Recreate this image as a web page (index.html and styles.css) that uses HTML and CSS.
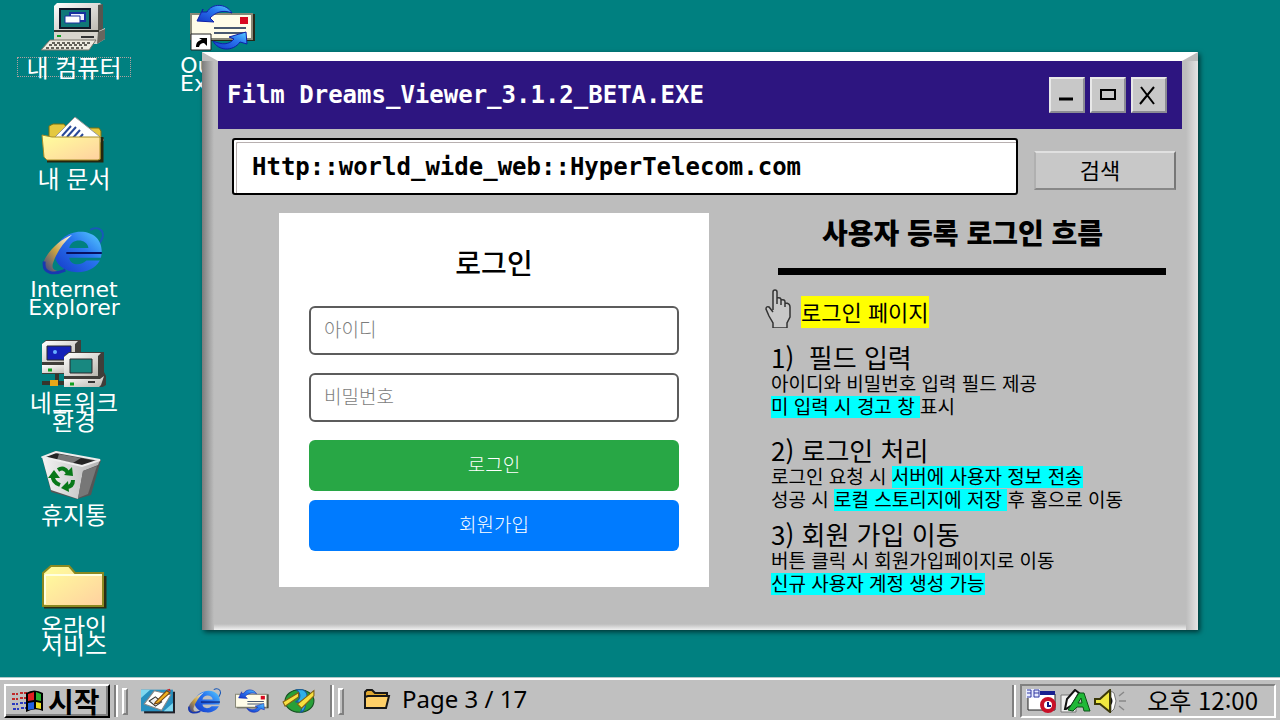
FILE: index.html
```html
<!DOCTYPE html>
<html lang="ko">
<head>
<meta charset="utf-8">
<title>Film Dreams Viewer</title>
<link rel="stylesheet" href="styles.css">
</head>
<body>
<svg class="defs" aria-hidden="true">
  <defs>
    <linearGradient id="paper" x1="0" y1="0" x2="1" y2="1"><stop offset="0" stop-color="#ffff9c"/><stop offset="1" stop-color="#ffd0a0"/></linearGradient>
    <linearGradient id="blue" x1="0" y1="1" x2="1" y2="0"><stop offset="0" stop-color="#1438c8"/><stop offset=".6" stop-color="#2a78f0"/><stop offset="1" stop-color="#58d0ff"/></linearGradient>
    <linearGradient id="gold" x1="0" y1="1" x2="1" y2="0"><stop offset="0" stop-color="#283890"/><stop offset=".5" stop-color="#c8a040"/><stop offset="1" stop-color="#fff"/></linearGradient>
    <linearGradient id="case" x1="0" y1="0" x2="1" y2="1"><stop offset="0" stop-color="#fff"/><stop offset="1" stop-color="#b8b4ac"/></linearGradient>
    <linearGradient id="bin" x1="0" y1="0" x2="1" y2="0"><stop offset="0" stop-color="#f4f4f4"/><stop offset="1" stop-color="#b4b4b4"/></linearGradient>
    <symbol id="ie" viewBox="0 0 66 50">
      <path d="M50 3c6-4 14-1 13 7-1 3-2 5-4 8" fill="none" stroke="#1858b8" stroke-width="2"/>
      <path d="M61 32H28c1 8 12 9 18 3h14C54 45 43 48 34 47 22 46 12 38 13 27 14 15 26 5 40 5c15 0 25 11 21 27zM28 22h20c-1-10-18-11-20 0z" fill="url(#blue)" fill-rule="evenodd"/>
      <path d="M25 27h37" stroke="#081060" stroke-width="2"/>
      <path d="M31 8C18 13 5 26 1 37c-2 12 9 14 22 8-8 2-14 0-12-7C15 26 22 16 31 8z" fill="url(#gold)"/>
      <path d="M2 36c-2 13 10 14 22 9" fill="none" stroke="#1838b0" stroke-width="3"/>
    </symbol>
    <symbol id="mail" viewBox="0 0 66 48">
      <path d="M4 11h61v27H4z" fill="#282818"/><path d="M1 11h61v25H1z" fill="#fffce8" stroke="#888878" stroke-width="2"/>
      <path d="M50 14h8v7h-8z" fill="#d80820"/><path d="M24 25h32M24 30h32" stroke="#485870" stroke-width="2"/>
      <path d="M42 10C36 0 22 0 17 9l-5 0 1-3-6 12 17 1-4-4c5-5 12-9 22-5z" fill="url(#blue)" stroke="#1020a8"/>
      <path d="M23 38c5 10 20 11 27 1l7 2-1-12-17 5 5 2c-5 6-12 6-21 2z" fill="url(#blue)" stroke="#1020a8"/>
    </symbol>
  </defs>
</svg>

<main class="desktop">
  <ul class="icons">
    <li class="icon">
      <svg viewBox="41 3 66 48" aria-hidden="true">
        <path d="M57 3h43l3 3v26H54V6z" fill="url(#case)"/><path d="M98 5l5-1v28l-5-2z" fill="#56554f"/>
        <path d="M59 8h32v21H59z" fill="#101828"/><path d="M61 10h28v17H61z" fill="#107878"/>
        <path d="M70 13h15v8H70z" fill="#eef" stroke="#1830a0" stroke-width="2"/><path d="M65 16h15v7H65z" fill="#fff" stroke="#1830a0"/>
        <path d="M54 31h45l6-3v11l-8 5H54z" fill="#d8d4cc"/><path d="M98 32l7-3v10l-8 5z" fill="#68665e"/><path d="M54 31h45" stroke="#34342f" stroke-width="2"/>
        <path d="M57 36h4" stroke="#10a020" stroke-width="2"/><path d="M81 37h13" stroke="#333" stroke-width="2"/>
        <path d="M50 40h46l-7 10H41z" fill="#eeeae0" stroke="#777368"/><path d="M52 43h38M49 45h38M46 48h37" stroke="#38362f" stroke-width="1.5" stroke-dasharray="3 2"/>
      </svg>
      <span class="icon-label selected">내 컴퓨터</span>
    </li>
    <li class="icon">
      <svg viewBox="41 115 66 48" aria-hidden="true">
        <path d="M49 139v-13l4-2h11l3 4h32l2 3v29H49z" fill="#e4c840" stroke="#777010"/>
        <path d="M75 117l29 23-20 16-29-19z" fill="#fff" stroke="#999"/><path d="M62 136l9-10M67 137l9-10M72 139l8-9M77 141l6-7" stroke="#284898" stroke-width="2"/>
        <path d="M102 137v24H47" fill="none" stroke="#26260e" stroke-width="3"/>
        <path d="M42 135l10 2h48v22l-2 1H47l-3-3z" fill="url(#paper)" stroke="#a88e28"/>
      </svg>
      <span class="icon-label">내 문서</span>
    </li>
    <li class="icon">
      <svg aria-hidden="true"><use href="#ie"/></svg>
      <span class="icon-label latin">Internet<br>Explorer</span>
    </li>
    <li class="icon">
      <svg viewBox="41 339 66 48" aria-hidden="true">
        <path d="M42 344l4-4h35v31l-4 3H42z" fill="#403e3a"/><path d="M42 344l4-3h32l-3 3v18H42z" fill="url(#case)"/><path d="M47 346h24v14H47z" fill="#1420b8" stroke="#28282c"/><circle cx="55" cy="352" r="2" fill="#68b0ff"/><path d="M42 365h34v8H42z" fill="url(#case)"/><path d="M48 370h4" stroke="#10a020" stroke-width="3"/>
        <path d="M57 374v9M42 383h23" stroke="#36342c" stroke-width="4"/><path d="M50 380h8v6h-8z" fill="#e8a818"/>
        <path d="M64 356l5-4h35v20l2 4v9l-5 3H64z" fill="#403e3a"/><path d="M64 357l5-4h32l-3 3v20H64z" fill="url(#case)"/>
        <path d="M70 359h22v14H70z" fill="#188880" stroke="#28282c"/><path d="M64 379h36l4-3-3 9-3 3H64z" fill="url(#case)"/><path d="M70 384h4" stroke="#10a020" stroke-width="3"/><path d="M88 382h7" stroke="#333" stroke-width="2"/>
      </svg>
      <span class="icon-label">네트워크<br>환경</span>
    </li>
    <li class="icon">
      <svg viewBox="41 452 66 48" aria-hidden="true">
        <path d="M42 458l13-6 46 9-10 35-14 4-26-7z" fill="#555"/>
        <path d="M45 458l11-4 39 8-13 5z" fill="#242424"/><path d="M59 455l22 4-8 5-16-3z" fill="#777"/>
        <path d="M42 458l40 9 18-6-2 5-15 6-5 28-27-9z" fill="url(#bin)"/><path d="M83 472l14-5-9 28-10 4z" fill="#777"/>
        <path d="M43 458l13-5 44 8-18 6z" fill="none" stroke="#eee" stroke-width="2"/>
        <path d="M58 471q6-4 10 3M73 481q0 7-7 7M60 486q-8-3-7-10" fill="none" stroke="#087818" stroke-width="4"/><path d="M64 476l9 1-1-9zM68 482l-7 7 8 4zM48 479l6-8 6 8z" fill="#087818"/>
      </svg>
      <span class="icon-label">휴지통</span>
    </li>
    <li class="icon">
      <svg viewBox="41 563 66 48" aria-hidden="true">
        <path d="M105 576v31H44" fill="none" stroke="#2d2c12" stroke-width="3"/>
        <path d="M43 573l8-7h18l6 7h28v33H43z" fill="url(#paper)" stroke="#8b8920" stroke-width="2"/><path d="M45 575h57M45 575v29" stroke="#ffffe0" stroke-width="2"/>
      </svg>
      <span class="icon-label">온라인<br>서비스</span>
    </li>
    <li class="icon">
      <svg viewBox="0 0 66 48" aria-hidden="true"><use href="#mail"/><path d="M1 31h20v16H1z" fill="#fff" stroke="#222"/><path d="M6 44c0-5 3-7 6-7l-3-2h8v8l-3-3c-3 0-4 1-5 4z"/></svg>
      <span class="icon-label latin">Outlook<br>Express</span>
    </li>
  </ul>

  <section class="window" aria-label="Film Dreams Viewer">
    <header class="titlebar">
      <h1>Film Dreams_Viewer_3.1.2_BETA.EXE</h1>
      <button class="winbtn" type="button" aria-label="Minimize"><svg viewBox="0 0 32 32"><path d="M8 20h14" stroke="#000" stroke-width="3"/></svg></button>
      <button class="winbtn" type="button" aria-label="Maximize"><svg viewBox="0 0 32 32"><path d="M9 11h14v9H9z" fill="none" stroke="#000" stroke-width="2"/></svg></button>
      <button class="winbtn" type="button" aria-label="Close"><svg viewBox="0 0 32 32"><path d="M8 8l13 17M21 8L7 25" stroke="#000" stroke-width="2"/></svg></button>
    </header>
    <form class="address">
      <input class="url" type="text" aria-label="주소" value="Http::world_wide_web::HyperTelecom.com">
      <button class="search" type="button">검색</button>
    </form>
    <div class="content">
      <form class="login">
        <h2>로그인</h2>
        <input type="text" aria-label="아이디" placeholder="아이디">
        <input type="password" aria-label="비밀번호" placeholder="비밀번호">
        <div class="actions">
          <button class="signin" type="button">로그인</button>
          <button class="signup" type="button">회원가입</button>
        </div>
      </form>
      <article class="notes">
        <h2>사용자 등록 로그인 흐름</h2>
        <hr>
        <p class="page-name">
          <svg viewBox="0 0 28 39" aria-hidden="true"><path d="M8 21V3q0-2 2-2t2 2v12-6q4-1 4 2v5-5q4-1 4 2v5-4q5 0 5 4v10l-3 6v5H8v-5l-4-7-3-7q0-3 3-2l4 5" fill="#c8c8c8" stroke="#333" stroke-width="1.5"/></svg>
          <mark class="yellow">로그인 페이지</mark>
        </p>
        <section class="step">
          <h3>1)&nbsp; 필드 입력</h3>
          <p>아이디와 비밀번호 입력 필드 제공</p>
          <p><mark>미 입력 시 경고 창&nbsp;</mark>표시</p>
        </section>
        <section class="step second">
          <h3>2) 로그인 처리</h3>
          <p>로그인 요청 시 <mark>서버에 사용자 정보 전송</mark></p>
          <p>성공 시 <mark>로컬 스토리지에 저장&nbsp;</mark>후 홈으로 이동</p>
        </section>
        <section class="step third">
          <h3>3) 회원 가입 이동</h3>
          <p>버튼 클릭 시 회원가입페이지로 이동</p>
          <p><mark>신규 사용자 계정 생성 가능</mark></p>
        </section>
      </article>
    </div>
  </section>
</main>

<footer class="taskbar">
  <button class="start" type="button">
    <svg viewBox="11 689 33 22" aria-hidden="true">
      <path d="M12 693h6M20 692h7M12 698h6M20 697h7" stroke="#c02828" stroke-width="2" stroke-dasharray="3 1"/><path d="M12 703h6M20 702h7M13 708h6M21 707h6" stroke="#2838c0" stroke-width="2" stroke-dasharray="3 1"/>
      <path d="M26 692q8-5 17 0v18q-8-4-17 1z"/><path d="M28 693l6-2v8l-6 1z" fill="#e02020"/><path d="M36 691l5 2v7l-5-1z" fill="#28b030"/><path d="M28 702l6-1v7l-6 1z" fill="#2060e0"/><path d="M36 701l5 1v6l-5-1z" fill="#f0e020"/>
    </svg>
    시작
  </button>
  <span class="divider"></span><span class="grip"></span>
  <nav class="quick" aria-label="빠른 실행">
    <button type="button" aria-label="바탕 화면 보기"><svg viewBox="0 0 33 24"><path d="M3 3h30v21H3z" fill="#202028"/><path d="M0 1h31v21H0z" fill="#2890c0"/><path d="M0 1h9L0 9zM31 22h-9l9-8z" fill="#80d8f0"/><path d="M13 2l16 4-9 15-17-6z" fill="#fff" stroke="#888"/><path d="M8 12l6-4 6 5-6 4z" fill="#eee" stroke="#333"/><path d="M14 13L25 2l3 2-11 10-4 1z" fill="#f0b020" stroke="#704010"/><path d="M25 1l3-1 1 3z" fill="#d02020"/></svg></button>
    <button type="button" aria-label="Internet Explorer"><svg><use href="#ie"/></svg></button>
    <button type="button" aria-label="Outlook Express"><svg><use href="#mail"/></svg></button>
    <button type="button" aria-label="채널 보기"><svg viewBox="0 0 33 24"><ellipse cx="17" cy="12" rx="14" ry="11" fill="#28a038" stroke="#145020"/><path d="M14 1c6 5 3 10-1 12 6-1 8 3 5 10 5-2 6-8 3-11 5-3 4-9-1-11z" fill="#30b0e8" stroke="#1858a0"/><path d="M1 13L16 4v4L3 17zM15 15L31 2v5L19 19z" fill="#f8e040" stroke="#806010"/></svg></button>
  </nav>
  <span class="divider"></span><span class="grip"></span>
  <div class="page-count">
    <svg viewBox="0 0 27 22" aria-hidden="true"><path d="M1 19V4l2-2h5l3 3h12v3" fill="#e0a830" stroke="#181818" stroke-width="2"/><path d="M1 20V9l3-1h21l-3 12z" fill="#ffd068" stroke="#181818" stroke-width="2"/></svg>
    Page 3 / 17
  </div>
  <span class="divider push"></span>
  <div class="tray">
    <svg viewBox="0 0 32 24" aria-hidden="true"><path d="M2 5h27v16H2z" fill="#fff" stroke="#222"/><path d="M14 2h15v4H14z" fill="#182090"/><path d="M0 0h14v9H0z" fill="#e8ecff"/><path d="M1 1h4v7M1 4h4M1 8h4M8 1h5v7H8zM8 4h5" fill="none" stroke="#3038a0"/><circle cx="22" cy="16" r="6" fill="#fff" stroke="#c81028" stroke-width="4"/><path d="M22 13v4h3" fill="none" stroke="#101880" stroke-width="2"/></svg>
    <svg viewBox="0 0 32 24" aria-hidden="true"><path d="M1 6h15v17H1z" fill="#eee" stroke="#777"/><path d="M5 20l2-10 8-9 4 3-7 12-6 4z" fill="#fff" stroke="#111" stroke-width="2"/><path d="M8 21L19 4h5l6 18h-6l-1-4h-6l-4 4zM18 14h4l-1-5z" fill="#20b838" stroke="#0c5018" fill-rule="evenodd"/></svg>
    <svg viewBox="0 0 32 24" aria-hidden="true"><path d="M17 2l3 2 2 8-2 8-3 3z" fill="#fff" stroke="#777"/><path d="M1 10h5L16 1v22L6 15H1z" fill="#f0e840" stroke="#3a3808" stroke-width="2"/><path d="M17 8q3 4 0 8z" fill="#111"/><path d="M25 7l5-4M25 12h7M25 17l5 4" stroke="#888" stroke-width="1.5"/></svg>
    <time>오후 12:00</time>
  </div>
</footer>
</body>
</html>
```
FILE: styles.css
```css
* { box-sizing: border-box; }

body {
  margin: 0;
  min-height: 100vh;
  display: flex;
  flex-direction: column;
  background: #008080;
  color: #000;
  font-family: "Noto Sans CJK KR", sans-serif;
}

h1, h2, h3, p, ul { margin: 0; padding: 0; }
button, input { font: inherit; color: inherit; margin: 0; border-radius: 0; }
svg { display: block; flex: none; }
.defs { position: absolute; width: 0; height: 0; }

.desktop { position: relative; flex: 1; }

.icons {
  position: absolute;
  top: 3px;
  left: 0;
  list-style: none;
  display: grid;
  grid-template: repeat(6, 112px) / 148px 150px;
  grid-auto-flow: column;
}
.icon {
  display: flex;
  flex-direction: column;
  align-items: center;
  gap: 6px;
  color: #fff;
}
.icon svg { width: 66px; height: 48px; }
.icon-label {
  font-size: 24px;
  line-height: 18px;
  text-align: center;
  white-space: nowrap;
}
.latin { font-family: "DejaVu Sans", sans-serif; font-size: 22px; }
.selected {
  padding: 0 8px;
  border: 1px dotted #b0a0a0;
}

.window {
  position: absolute;
  top: 52px;
  left: 202px;
  right: 82px;
  padding-bottom: 36px;
  border: 0 solid transparent;
  border-width: 9px 16px 0;
  border-top-color: #fff;
  background:
    linear-gradient(to right, #7c7c7c, #bdbdbd) left / 12px 100% no-repeat border-box,
    linear-gradient(to left, #e4e4e4, #bdbdbd) right / 12px 100% no-repeat border-box,
    linear-gradient(to top, #f0f0f0, #bdbdbd) bottom / 100% 6px no-repeat border-box,
    #bdbdbd border-box;
  box-shadow: 2px 2px 5px rgba(0, 0, 0, .6);
}

.titlebar {
  display: flex;
  align-items: center;
  gap: 5px;
  padding: 16px 15px 16px 9px;
  background: #2d1580;
}
.titlebar h1 {
  flex: 1;
  color: #fff;
  font: bold 24px/32px "DejaVu Sans Mono", monospace;
}
.winbtn {
  width: 36px;
  height: 36px;
  padding: 0;
  background: #c8c8c8;
  border: 2px solid;
  border-color: #e8e8e8 #8c8c94 #8c8c94 #e8e8e8;
}

.address {
  display: flex;
  align-items: flex-end;
  gap: 16px;
  padding: 9px 6px 18px 14px;
}
.url {
  flex: 1;
  min-width: 0;
  height: 57px;
  padding: 0 18px;
  border: 2px solid #000;
  border-radius: 3px;
  background: #fff;
  box-shadow: inset 2px 2px #fff, inset 3px 3px #b8b0b0;
  font: bold 24px/32px "DejaVu Sans Mono", monospace;
}
.search {
  width: 142px;
  height: 39px;
  margin-bottom: 5px;
  padding: 0 10px 4px 0;
  border: 2px solid;
  border-color: #e0e0e0 #777 #888 #b0b0b0;
  background: #c8c8c8;
  font-size: 22px;
  line-height: 30px;
}

.content {
  display: flex;
  align-items: flex-start;
  gap: 56px;
  padding: 0 16px 0 61px;
}

.login {
  flex: 0 1 430px;
  display: flex;
  flex-direction: column;
  gap: 18px;
  padding: 30px 30px 36px;
  background: #fff;
  font-size: 19px;
  font-weight: 300;
}
.login h2 {
  margin-bottom: 7px;
  font-size: 28px;
  font-weight: 500;
  line-height: 38px;
  text-align: center;
}
.login input {
  height: 49px;
  padding: 0 13px 4px;
  border: 2px solid #5c5c5c;
  border-radius: 6px;
  background: #fff;
}
.login input::placeholder { color: #7c7c7c; opacity: 1; }
.actions { display: flex; flex-direction: column; gap: 9px; }
.actions button {
  height: 51px;
  padding: 0 0 4px;
  border: 0;
  border-radius: 6px;
  color: #fff;
}
.signin { background: #28a745; }
.signup { background: #007bff; }

.notes { flex: 1; min-width: 0; white-space: nowrap; }
.notes h2 {
  font-size: 28px;
  font-weight: 900;
  line-height: 38px;
  text-align: center;
  padding-right: 6px;
}
.notes hr {
  height: 7px;
  margin: 17px 0 14px 13px;
  border: 0;
  background: #000;
}
.page-name {
  display: flex;
  align-items: flex-end;
  gap: 8px;
  font-size: 22px;
}
.page-name svg { width: 28px; height: 39px; }
mark {
  display: inline-block;
  line-height: 19px;
  padding-bottom: 3px;
  margin-bottom: -3px;
  background: #0ff;
  color: inherit;
}
.yellow {
  margin: 0;
  padding-bottom: 2px;
  background: #ff0;
  line-height: 30px;
}
.step { margin-top: 15px; padding-left: 6px; font-size: 19px; line-height: 23px; }
.step.second { margin-top: 19px; }
.step.third { margin-top: 10px; }
.step h3 { font-size: 26px; font-weight: 400; line-height: 28px; }

.taskbar {
  display: flex;
  align-items: center;
  height: 42px;
  padding: 2px 4px 0;
  border-top: 2px solid #fff;
  background: #c0c0c0;
  box-shadow: 0 -1px #b0c8c8;
}
.start {
  display: flex;
  align-items: center;
  gap: 4px;
  width: 106px;
  height: 34px;
  padding: 0 5px;
  border: 2px solid;
  border-color: #fff #000 #000 #fff;
  box-shadow: inset -2px -2px #808080;
  background: #c0c0c0;
  font-size: 28px;
  font-weight: 700;
  line-height: 28px;
  white-space: nowrap;
}
.start svg { width: 33px; height: 22px; }
.divider {
  width: 4px;
  height: 32px;
  margin: 0 4px;
  border-left: 2px solid #808080;
  border-right: 2px solid #fff;
}
.grip {
  width: 6px;
  height: 27px;
  border: 2px solid;
  border-color: #fff #808080 #808080 #fff;
}
.quick { display: flex; gap: 13px; margin: 0 10px 0 13px; }
.quick button { padding: 0; border: 0; background: none; }
.quick svg { width: 34px; height: 26px; }
.page-count {
  display: flex;
  align-items: center;
  gap: 11px;
  margin-left: 20px;
  padding-bottom: 4px;
  font: 24px/32px "Noto Sans", sans-serif;
  white-space: nowrap;
}
.page-count svg { width: 27px; height: 22px; }
.push { margin-left: auto; }
.tray {
  display: flex;
  align-items: center;
  gap: 2px;
  height: 34px;
  padding: 0 16px 0 4px;
  border: 2px solid;
  border-color: #808080 #fff #fff #808080;
  font-size: 24px;
  line-height: 28px;
  white-space: nowrap;
}
.tray svg { width: 32px; height: 24px; }
.tray time { margin-left: 19px; padding-bottom: 2px; }
```
